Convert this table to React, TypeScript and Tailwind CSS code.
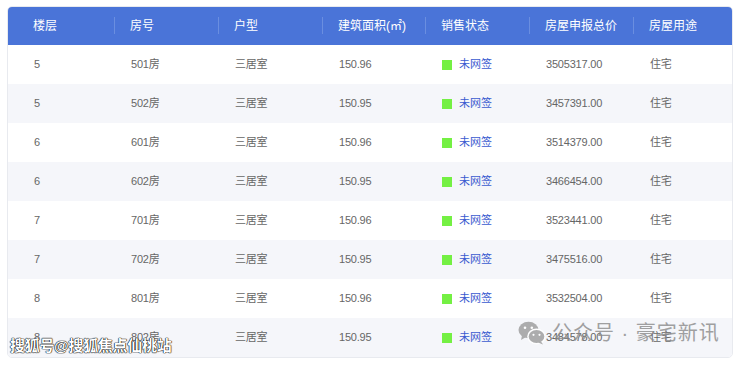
import React from "react";

const rows = [
  ["5", "501房", "三居室", "150.96", "3505317.00"],
  ["5", "502房", "三居室", "150.95", "3457391.00"],
  ["6", "601房", "三居室", "150.96", "3514379.00"],
  ["6", "602房", "三居室", "150.95", "3466454.00"],
  ["7", "701房", "三居室", "150.96", "3523441.00"],
  ["7", "702房", "三居室", "150.95", "3475516.00"],
  ["8", "801房", "三居室", "150.96", "3532504.00"],
  ["8", "802房", "三居室", "150.95", "3484578.00"],
];

const headers = ["楼层", "房号", "户型", "建筑面积(㎡)", "销售状态", "房屋申报总价", "房屋用途"];

const cols = "grid grid-cols-[107px_104px_104px_103px_104px_104px_1fr]";

function WeChat() {
  return (
    <svg width="28" height="24" viewBox="0 0 28 24">
      <ellipse cx="10.5" cy="9" rx="10" ry="8.3" fill="#9a9a9a" />
      <path d="M4 14.5 L3 19 L8 16 Z" fill="#9a9a9a" />
      <circle cx="7" cy="6.8" r="1.3" fill="#fff" />
      <circle cx="13.8" cy="6.8" r="1.3" fill="#fff" />
      <ellipse cx="18.5" cy="15.5" rx="8.6" ry="7.2" fill="#9a9a9a" stroke="#fff" strokeWidth="1.5" />
      <path d="M23 20.5 L25 23.5 L20 21.5 Z" fill="#9a9a9a" />
      <circle cx="15.5" cy="13.8" r="1.1" fill="#fff" />
      <circle cx="21.5" cy="13.8" r="1.1" fill="#fff" />
    </svg>
  );
}

export default function App() {
  return (
    <div
      className="relative w-[740px] h-[365px] bg-white overflow-hidden"
      style={{ fontFamily: '"Liberation Sans", "Noto Sans CJK SC", sans-serif' }}
    >
      <div className="pt-[6px] pl-[7px]">
        <div className="w-[726px] rounded-[5px] border border-[#e8eaef] overflow-hidden">
          <div className={`${cols} h-[39px] bg-[#4a74d8] text-white text-[12px] -mx-px -mt-px`}>
            {headers.map((h, i) => (
              <div key={i} className={`flex items-center ${i === 0 ? "pl-[26px]" : "pl-4"} relative`}>
                {i > 0 && <span className="absolute left-0 top-[11px] h-[17px] w-px bg-[#6a8ee0]" />}
                {h}
              </div>
            ))}
          </div>
          {rows.map((r, ri) => (
            <div
              key={ri}
              className={`${cols} h-[39px] text-[11px] text-[#666] tracking-[-0.2px] ${ri % 2 === 1 ? "bg-[#f5f6fa]" : "bg-white"}`}
            >
              <div className="flex items-center pl-[26px]">{r[0]}</div>
              <div className="flex items-center pl-4">{r[1]}</div>
              <div className="flex items-center pl-4">{r[2]}</div>
              <div className="flex items-center pl-4">{r[3]}</div>
              <div className="flex items-center pl-4">
                <span className="w-[10px] h-[10px] bg-[#74f043] mr-[7px]" />
                <span className="text-[#3a5bd0] tracking-normal">未网签</span>
              </div>
              <div className="flex items-center pl-4">{r[4]}</div>
              <div className="flex items-center pl-4">住宅</div>
            </div>
          ))}
        </div>
      </div>
      <div
        className="absolute left-[10px] top-[338px] text-[15px] font-bold text-white leading-none tracking-[-0.3px]"
        style={{ textShadow: "0 0 1px #000, 0 0 1px #000, 0 0 1px #000" }}
      >
        搜狐号@搜狐焦点仙桃站
      </div>
      <div className="absolute left-[518px] top-[321px] flex items-center gap-[6px] opacity-80">
        <WeChat />
        <span className="text-[20px] text-[#8a8a8a] leading-none tracking-[1px]">公众号 · 豪宅新讯</span>
      </div>
    </div>
  );
}
